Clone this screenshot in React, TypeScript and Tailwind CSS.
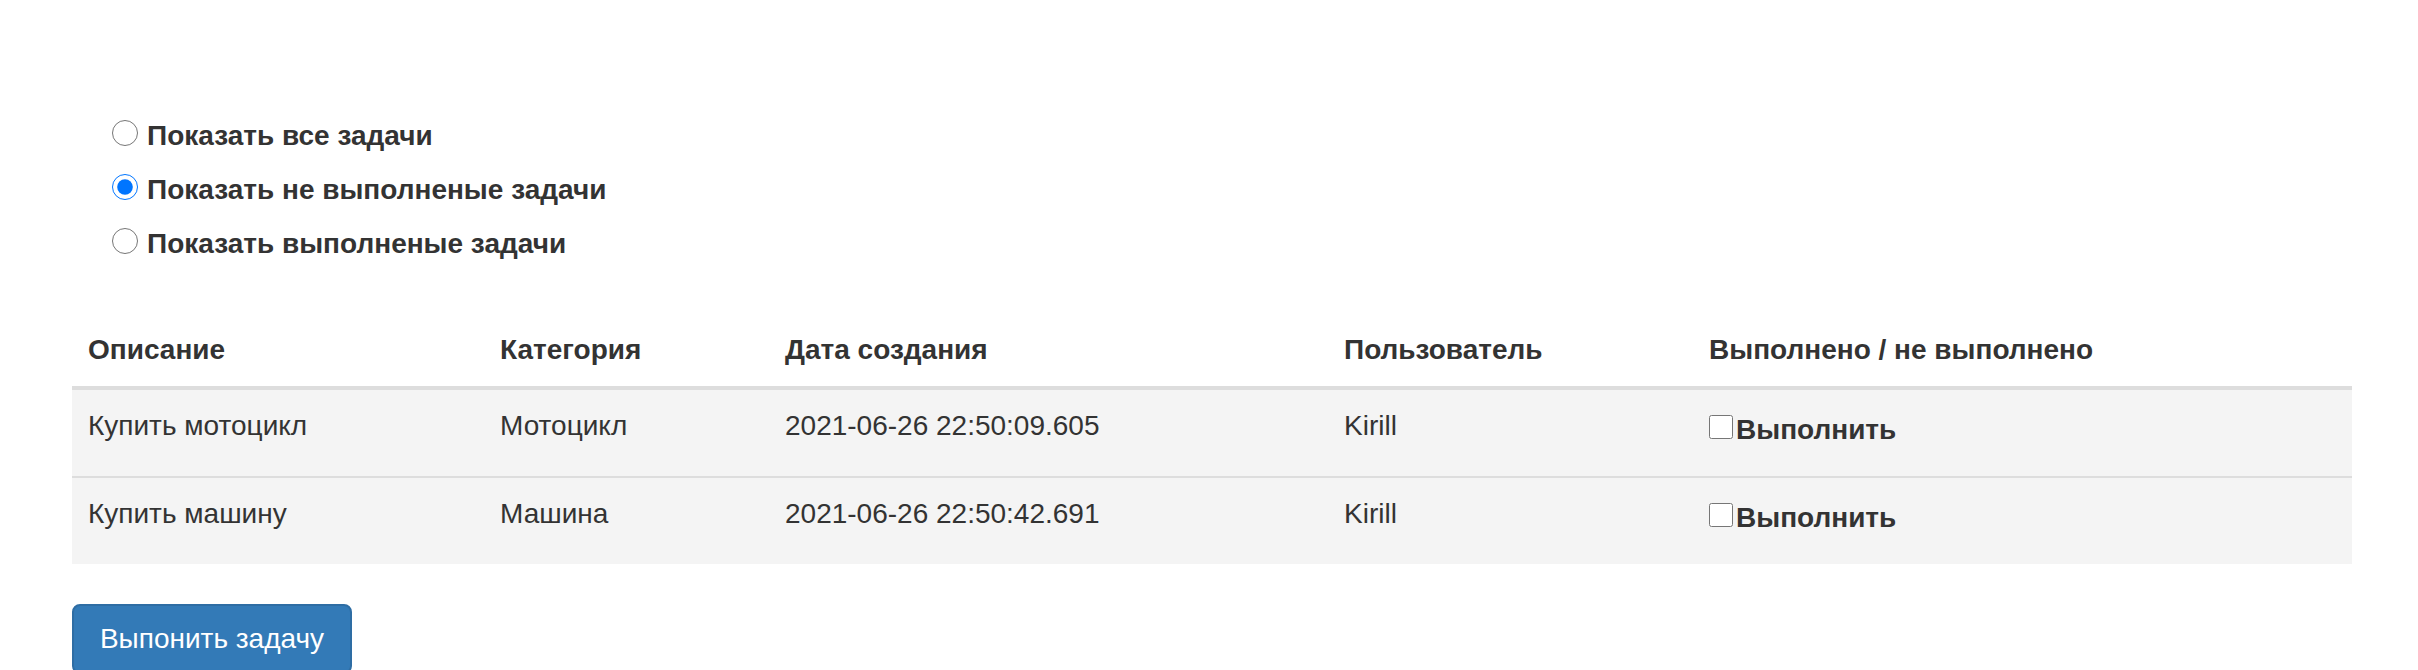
import React from 'react';

type Task = {
    description: string;
    category: string;
    created: string;
    user: string;
};

const tasks: Task[] = [
    { description: 'Купить мотоцикл', category: 'Мотоцикл', created: '2021-06-26 22:50:09.605', user: 'Kirill' },
    { description: 'Купить машину', category: 'Машина', created: '2021-06-26 22:50:42.691', user: 'Kirill' },
];

const filters = [
    { id: 'all', label: 'Показать все задачи' },
    { id: 'undone', label: 'Показать не выполненые задачи' },
    { id: 'done', label: 'Показать выполненые задачи' },
];

const App = () => {
    const [filter, setFilter] = React.useState<string>('undone');
    const [checked, setChecked] = React.useState<Record<number, boolean>>({});

    return (
        <div className="min-h-screen bg-white text-[#333] font-['Liberation_Sans',Arial,sans-serif] pt-[109px] pl-[72px] pr-[66px]">
            {/* Filter radios */}
            <div className="flex flex-col pl-[40px]">
                {filters.map((f) => (
                    <label key={f.id} className="flex items-center h-[54px] gap-[9px] cursor-pointer">
                        <input
                            type="radio"
                            name="filter"
                            className="m-0 w-[26px] h-[26px] -mt-[6px]"
                            checked={filter === f.id}
                            onChange={() => setFilter(f.id)}
                        />
                        <span className="text-[28px] font-bold leading-[40px]">{f.label}</span>
                    </label>
                ))}
            </div>

            {/* Tasks table */}
            <table className="mt-[43px] w-[2280px] border-separate border-spacing-0 text-[28px] leading-[40px]">
                <thead>
                    <tr className="text-left">
                        <th className="w-[412px] px-4 py-4 font-bold border-b-4 border-[#ddd]">Описание</th>
                        <th className="w-[285px] px-4 py-4 font-bold border-b-4 border-[#ddd]">Категория</th>
                        <th className="w-[559px] px-4 py-4 font-bold border-b-4 border-[#ddd]">Дата создания</th>
                        <th className="w-[365px] px-4 py-4 font-bold border-b-4 border-[#ddd]">Пользователь</th>
                        <th className="w-[659px] px-4 py-4 font-bold border-b-4 border-[#ddd]">Выполнено / не выполнено</th>
                    </tr>
                </thead>
                <tbody>
                    {tasks.map((t, i) => (
                        <tr key={i} className="bg-[#f4f4f4] align-top">
                            <td className={`px-4 pt-4 pb-[30px] ${i > 0 ? 'border-t-2 border-[#ddd]' : ''}`}>{t.description}</td>
                            <td className={`px-4 pt-4 pb-[30px] ${i > 0 ? 'border-t-2 border-[#ddd]' : ''}`}>{t.category}</td>
                            <td className={`px-4 pt-4 pb-[30px] ${i > 0 ? 'border-t-2 border-[#ddd]' : ''}`}>{t.created}</td>
                            <td className={`px-4 pt-4 pb-[30px] ${i > 0 ? 'border-t-2 border-[#ddd]' : ''}`}>{t.user}</td>
                            <td className={`px-4 pt-4 pb-[30px] ${i > 0 ? 'border-t-2 border-[#ddd]' : ''}`}>
                                <label className="flex items-baseline h-[40px] pt-1 cursor-pointer">
                                    <input
                                        type="checkbox"
                                        className="m-0 mr-[3px] w-[24px] h-[24px]"
                                        checked={!!checked[i]}
                                        onChange={() => setChecked({ ...checked, [i]: !checked[i] })}
                                    />
                                    <span className="font-bold">Выполнить</span>
                                </label>
                            </td>
                        </tr>
                    ))}
                </tbody>
            </table>

            <button className="mt-10 w-[280px] py-[13px] text-[28px] leading-[40px] text-white bg-[#337ab7] border-2 border-[#2e6da4] rounded-lg">
                Выпонить задачу
            </button>
        </div>
    );
};

export default App;
